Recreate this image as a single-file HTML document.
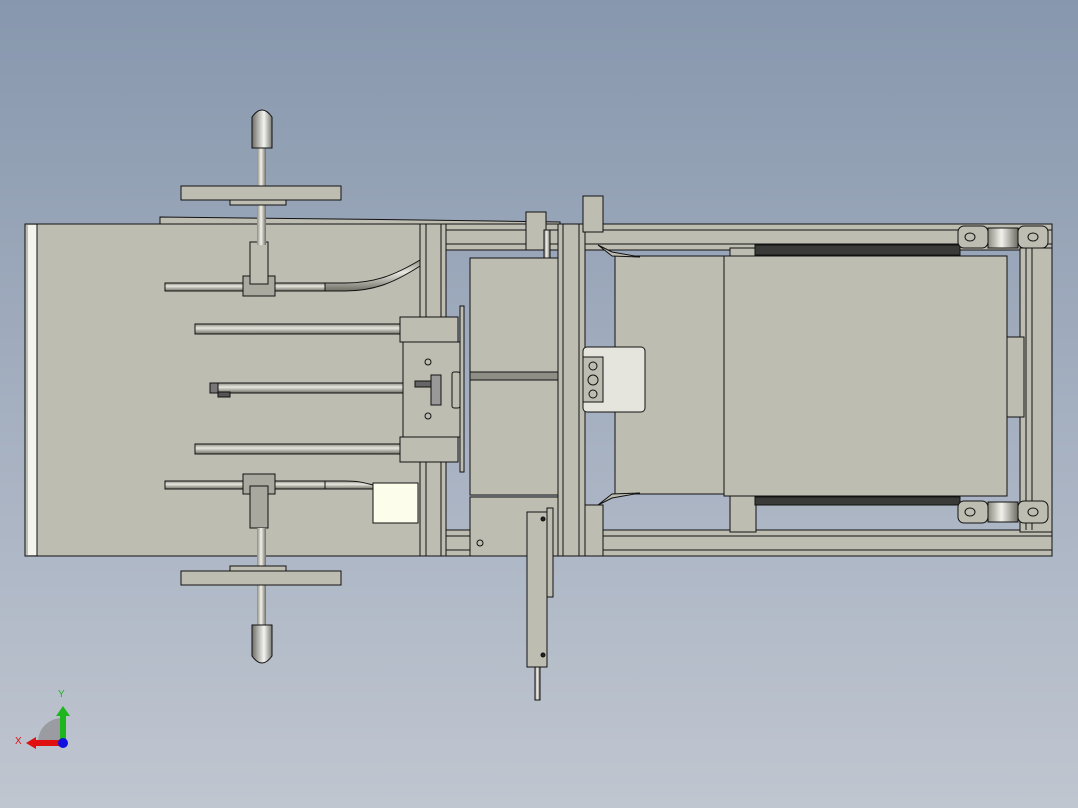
<!DOCTYPE html>
<html><head><meta charset="utf-8"><style>
html,body{margin:0;padding:0;width:1078px;height:808px;overflow:hidden}
body{background:linear-gradient(#8797ad 0%,#a4afc0 50%,#c0c6d0 100%)}
svg{position:absolute;left:0;top:0}
</style></head><body>
<svg width="1078" height="808" viewBox="0 0 1078 808" xmlns="http://www.w3.org/2000/svg">
<defs>
<linearGradient id="rodh" x1="0" y1="0" x2="0" y2="1"><stop offset="0" stop-color="#8c8b80"/><stop offset=".4" stop-color="#e8e8e0"/><stop offset="1" stop-color="#6e6d64"/></linearGradient>
<linearGradient id="rodv" x1="0" y1="0" x2="1" y2="0"><stop offset="0" stop-color="#8c8b80"/><stop offset=".45" stop-color="#f2f2ec"/><stop offset="1" stop-color="#6e6d64"/></linearGradient>
<linearGradient id="knob" x1="0" y1="0" x2="1" y2="0"><stop offset="0" stop-color="#6d6c66"/><stop offset=".6" stop-color="#f4f4f0"/><stop offset="1" stop-color="#7a7972"/></linearGradient>
</defs>
<g stroke="#111" stroke-width="1" fill="#bebdb2">
<!-- top left skewed strip -->
<polygon points="160,217 420,220 560,222 560,226 160,226"/>
<!-- frame top rail -->
<rect x="420" y="224" width="632" height="26"/>
<line x1="445" y1="230" x2="1052" y2="230"/><line x1="445" y1="244" x2="1052" y2="244"/>
<!-- frame bottom rail -->
<rect x="420" y="530" width="632" height="26"/>
<line x1="445" y1="536" x2="1052" y2="536"/><line x1="445" y1="550" x2="1052" y2="550"/>
<!-- right vertical -->
<rect x="1020" y="248" width="32" height="284"/>
<line x1="1026" y1="248" x2="1026" y2="530"/><line x1="1032" y1="248" x2="1032" y2="530"/>
<rect x="1006" y="337" width="18" height="80"/>
<!-- inner posts -->
<rect x="730" y="248" width="26" height="284"/>
<!-- left big plate -->
<rect x="25" y="224" width="395" height="332"/>
<rect x="28" y="225" width="9" height="330" fill="#f4f4ee" stroke="none"/>
<line x1="37" y1="224" x2="37" y2="556"/>
<!-- vertical rails near plate -->
<rect x="420" y="224" width="26" height="332"/>
<line x1="426" y1="224" x2="426" y2="556"/><line x1="441" y1="224" x2="441" y2="556"/>
<!-- middle block -->
<rect x="470" y="258" width="90" height="237"/>
<rect x="470" y="372" width="90" height="8" fill="#8f8e86"/>
<rect x="470" y="497" width="90" height="59"/>
<circle cx="480" cy="543" r="3" fill="none"/>
<!-- right parts -->
<rect x="615" y="256" width="110" height="238"/>
<rect x="755" y="245" width="205" height="10" fill="#3a3a38"/>
<rect x="755" y="497" width="205" height="8" fill="#3a3a38"/>
<rect x="724" y="256" width="283" height="240"/>
<polygon points="598,245 612,256 640,257 612,252" />
<polygon points="598,505 612,494 640,493 612,498" />
<!-- vertical profile -->
<rect x="558" y="224" width="27" height="332"/>
<line x1="563" y1="224" x2="563" y2="556"/><line x1="579" y1="224" x2="579" y2="556"/>
<rect x="585" y="505" width="18" height="51"/>
<!-- small blocks top -->
<rect x="526" y="212" width="20" height="38"/>
<rect x="583" y="196" width="20" height="36"/>
<rect x="544" y="230" width="6" height="28" fill="url(#rodv)"/>
<!-- connector -->
<rect x="583" y="347" width="62" height="65" rx="4" fill="#e5e5de"/>
<rect x="583" y="357" width="20" height="45" fill="#bebdb2"/>
<circle cx="593" cy="366" r="4" fill="none"/><circle cx="593" cy="380" r="5" fill="none"/><circle cx="593" cy="394" r="4" fill="none"/>
<!-- bearings -->
<g>
<rect x="958" y="226" width="30" height="22" rx="6"/><ellipse cx="970" cy="237" rx="5" ry="4" fill="none"/>
<rect x="1018" y="226" width="30" height="22" rx="6"/><ellipse cx="1033" cy="237" rx="5" ry="4" fill="none"/>
<rect x="988" y="228" width="30" height="20" fill="url(#rodv)"/>
<rect x="958" y="501" width="30" height="22" rx="6"/><ellipse cx="970" cy="512" rx="5" ry="4" fill="none"/>
<rect x="1018" y="501" width="30" height="22" rx="6"/><ellipse cx="1033" cy="512" rx="5" ry="4" fill="none"/>
<rect x="988" y="502" width="30" height="20" fill="url(#rodv)"/>
</g>
<!-- horizontal rods -->
<rect x="165" y="283" width="160" height="8" fill="url(#rodh)"/>
<path d="M325,283 L345,283 C375,283 395,275 420,260 L420,266 C395,282 375,291 345,291 L325,291 Z" fill="url(#rodh)"/>
<rect x="165" y="481" width="160" height="8" fill="url(#rodh)"/>
<path d="M325,481 L345,481 C360,481 365,483 373,485 L373,489 L345,489 L325,489 Z" fill="url(#rodh)"/>
<rect x="195" y="324" width="210" height="10" fill="url(#rodh)"/>
<rect x="195" y="444" width="210" height="10" fill="url(#rodh)"/>
<rect x="212" y="383" width="220" height="10" fill="url(#rodh)"/>
<rect x="210" y="383" width="8" height="10" fill="#777"/>
<rect x="218" y="392" width="12" height="5" fill="#555"/>
<!-- slider plate -->
<rect x="403" y="342" width="57" height="95"/>
<circle cx="428" cy="362" r="3" fill="none"/><circle cx="428" cy="416" r="3" fill="none"/>
<rect x="400" y="317" width="58" height="25"/>
<rect x="400" y="437" width="58" height="25"/>
<rect x="460" y="306" width="4" height="166"/>
<rect x="452" y="372" width="8" height="36" rx="2"/>
<rect x="431" y="375" width="10" height="30" fill="#999"/>
<rect x="415" y="381" width="16" height="6" fill="#666"/>
<!-- white box -->
<rect x="373" y="483" width="45" height="40" fill="#fdfdec"/>
<!-- lever assemblies -->
<rect x="243" y="276" width="32" height="20" fill="#aaa9a0"/>
<rect x="250" y="242" width="18" height="42"/>
<rect x="243" y="474" width="32" height="20" fill="#aaa9a0"/>
<rect x="250" y="486" width="18" height="42" fill="#a9a89f"/>
<!-- handles -->
<rect x="257" y="145" width="9" height="100" fill="url(#rodv)" stroke="none"/>
<rect x="257" y="528" width="9" height="120" fill="url(#rodv)" stroke="none"/>
<rect x="230" y="200" width="56" height="5"/>
<rect x="181" y="186" width="160" height="14"/>
<rect x="230" y="566" width="56" height="5"/>
<rect x="181" y="571" width="160" height="14"/>
<path d="M252,148 L252,117 Q262,103 272,117 L272,148 Z" fill="url(#knob)"/>
<path d="M252,625 L252,656 Q262,670 272,656 L272,625 Z" fill="url(#knob)"/>
<!-- cylinder -->
<rect x="547" y="508" width="6" height="89"/>
<rect x="527" y="512" width="20" height="155"/>
<circle cx="543" cy="519" r="2" fill="#222"/><circle cx="543" cy="655" r="2" fill="#222"/>
<rect x="535" y="667" width="5" height="33" fill="url(#rodv)"/>
</g>
<!-- axis triad -->
<path d="M62,742 L38,742 A24,24 0 0 1 62,718 Z" fill="#9a9ca2"/>
<rect x="60" y="714" width="6" height="28" fill="#1fb51f"/>
<polygon points="56,716 63,706 70,716" fill="#1fb51f"/>
<rect x="34" y="740" width="28" height="6" fill="#e01010"/>
<polygon points="36,737 26,743 36,749" fill="#e01010"/>
<circle cx="63" cy="743" r="5" fill="#1010e0"/>
<text x="58" y="697" font-family="Liberation Sans,sans-serif" font-size="10" fill="#1fb51f">Y</text>
<text x="15" y="744" font-family="Liberation Sans,sans-serif" font-size="10" fill="#e01010">X</text>
</svg>
</body></html>
